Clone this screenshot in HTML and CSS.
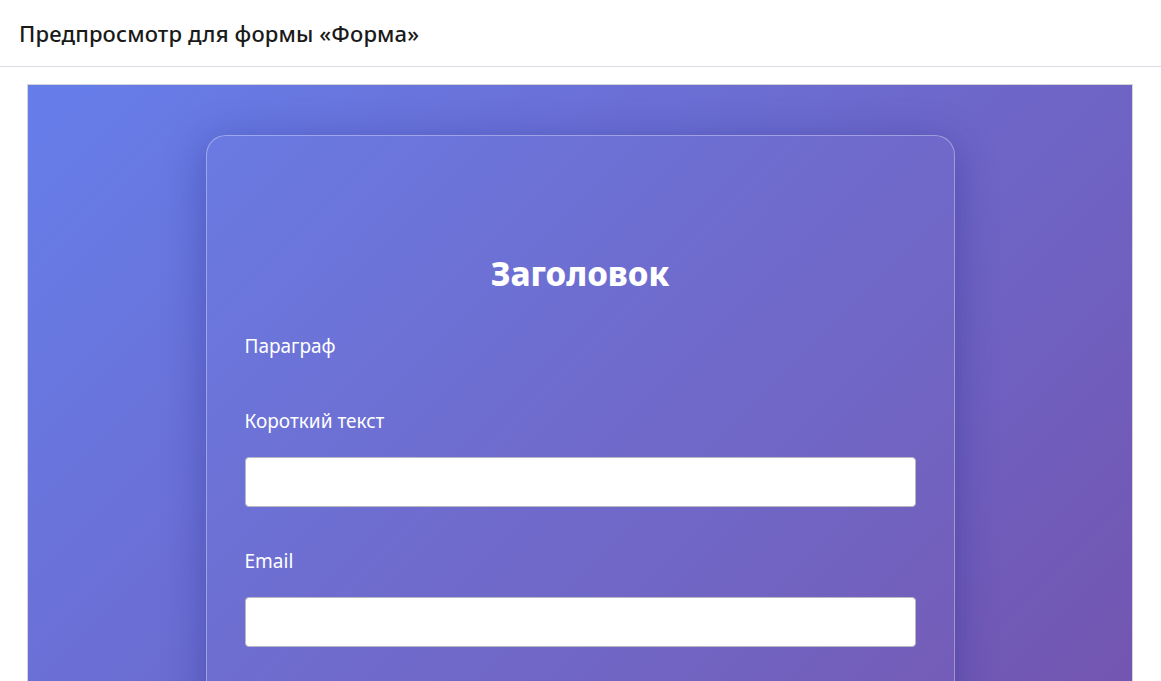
FILE: index.html
```html
<!DOCTYPE html>
<html lang="ru">
<head>
	<meta charset="UTF-8">
	<title>Предпросмотр формы</title>
	<link rel="stylesheet" href="styles.css">
</head>
<body>

	<div class="top">
		<h1 class="top-tit">Предпросмотр для формы «Форма»</h1>
	</div>

	<div class="preview">
		<form class="card">
			<h2 class="card-tit">Заголовок</h2>
			<p class="para">Параграф</p>

			<div class="field">
				<label class="label">Короткий текст</label>
				<input class="input" type="text">
			</div>

			<div class="field">
				<label class="label">Email</label>
				<input class="input" type="email">
			</div>
		</form>
	</div><!-- .preview -->

</body>
</html>
```

FILE: styles.css
```css
body{ margin: 0; font-family: "Noto Sans", "Open Sans", sans-serif; color: #1a1a1a; background: #fff;}
.top{ display: flex; align-items: center; padding: 0 19px; height: 66px; border-bottom: 1px solid #dcdbe3;}
.top-tit{ margin: 0; font-size: 22px; font-weight: 500; letter-spacing: 0.15px;}

.preview{ margin: 17px 28px 0 27px; padding: 50px 0 80px; min-height: 900px; border: 1px solid #d4d4d8; background: linear-gradient(135deg, #667eea 0%, #764ba2 100%);}
.card{ box-sizing: border-box; margin: 0 auto; padding: 100px 38px 120px; width: 749px; color: #fff; background: rgba(255,255,255,0.02); border: 1px solid rgba(255,255,255,0.34); border-radius: 20px; box-shadow: 0 8px 40px rgba(31,38,135,0.4);}
.card-tit{ margin: 0 0 22px; font-size: 33px; font-weight: 800; line-height: 76px; text-align: center;}
.para{ margin: 0 0 51px; font-size: 19px; line-height: 24px;}
.field{ margin-bottom: 42px;}
.label{ display: block; margin-bottom: 24px; font-size: 19px; line-height: 24px;}
.input{ display: block; box-sizing: border-box; width: 100%; height: 50px; padding: 0 12px; font-size: 16px; background: #fff; border: 1px solid #b9b9c3; border-radius: 4px;}
```
